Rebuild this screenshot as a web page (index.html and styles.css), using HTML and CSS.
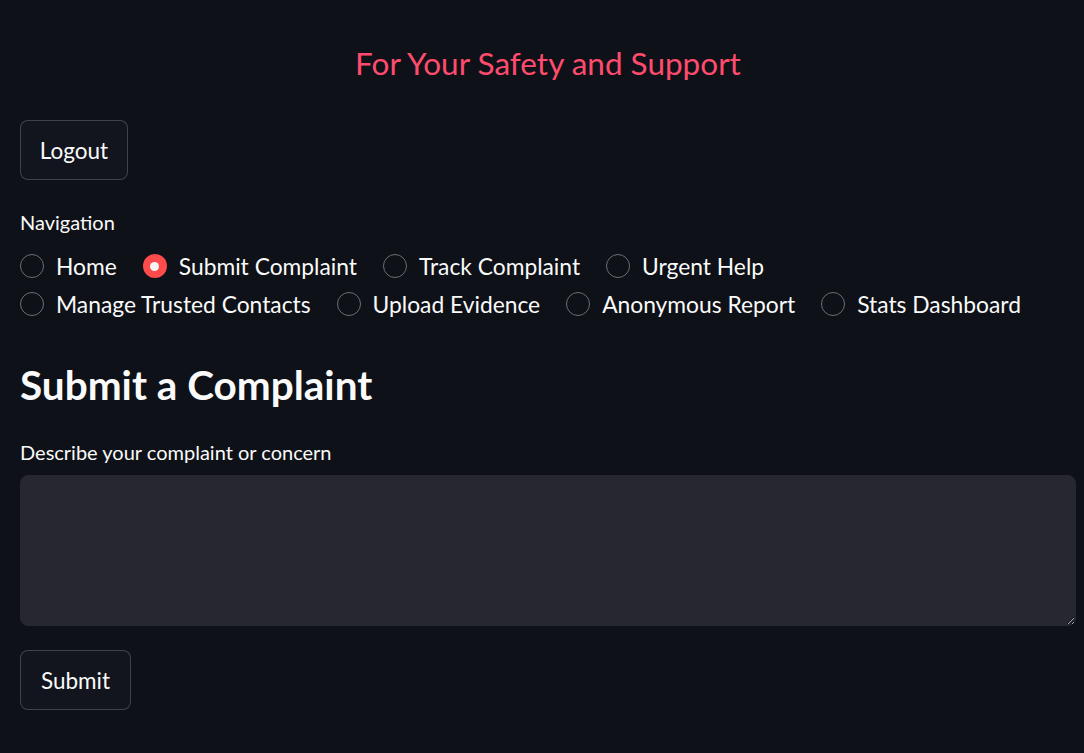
FILE: index.html
```html
<!DOCTYPE html>
<html>
<head>
<meta charset="utf-8">
<link rel="stylesheet" href="styles.css">
</head>
<body>
<div class="app">
  <div class="tagline">For Your Safety and Support</div>
  <button class="btn btn-logout">Logout</button>
  <div class="field-label nav-label">Navigation</div>
  <div class="radio-group">
    <label class="radio"><span class="dot"></span><span>Home</span></label>
    <label class="radio checked"><span class="dot"></span><span>Submit Complaint</span></label>
    <label class="radio"><span class="dot"></span><span>Track Complaint</span></label>
    <label class="radio"><span class="dot"></span><span>Urgent Help</span></label>
    <label class="radio"><span class="dot"></span><span>Manage Trusted Contacts</span></label>
    <label class="radio"><span class="dot"></span><span>Upload Evidence</span></label>
    <label class="radio"><span class="dot"></span><span>Anonymous Report</span></label>
    <label class="radio"><span class="dot"></span><span>Stats Dashboard</span></label>
  </div>
  <h2 class="heading">Submit a Complaint</h2>
  <div class="field-label desc-label">Describe your complaint or concern</div>
  <textarea class="textarea"></textarea>
  <button class="btn btn-submit">Submit</button>
</div>
</body>
</html>
```
FILE: styles.css
```css
html, body {
  margin: 0;
  padding: 0;
  background: #0e1117;
  height: 100%;
  overflow: hidden;
}
body {
  font-family: "Lato", "Noto Sans", sans-serif;
  color: #fafafa;
}
.app {
  display: flex;
  flex-direction: column;
  align-items: flex-start;
  padding: 0 8px 0 20px;
}
.tagline {
  align-self: stretch;
  text-align: center;
  color: #ff4b6e;
  font-size: 31.5px;
  line-height: 40px;
  margin-top: 43px;
}
.btn {
  font-family: inherit;
  font-size: 22.5px;
  color: #fafafa;
  background: #12151d;
  border: 1px solid rgba(250, 250, 250, 0.2);
  border-radius: 8px;
  height: 60px;
  padding: 0 14px;
  cursor: pointer;
}
.btn-logout {
  margin-top: 37px;
  width: 108px;
}
.field-label {
  font-size: 20px;
  line-height: 24px;
}
.nav-label {
  margin-top: 30px;
}
.radio-group {
  display: flex;
  flex-wrap: wrap;
  column-gap: 26px;
  row-gap: 6px;
  margin-top: 16px;
  max-width: 1030px;
}
.radio {
  display: flex;
  align-items: center;
  gap: 12px;
  font-size: 22.8px;
  line-height: 32px;
}
.dot {
  width: 24px;
  height: 24px;
  box-sizing: border-box;
  border-radius: 50%;
  border: 1.5px solid #6d6f75;
  background: #0e1117;
  display: flex;
  align-items: center;
  justify-content: center;
}
.radio.checked .dot {
  border: none;
  background: #ff4b4b;
}
.radio.checked .dot::after {
  content: "";
  width: 9px;
  height: 9px;
  border-radius: 50%;
  background: #f5f5f5;
}
.heading {
  font-size: 40.5px;
  font-weight: 700;
  line-height: 48px;
  margin: 41px 0 0 0;
}
.desc-label {
  margin-top: 31px;
}
.textarea {
  align-self: stretch;
  margin-top: 11px;
  height: 151px;
  box-sizing: border-box;
  background: #262730;
  border: 1px solid #262730;
  border-radius: 8px;
  color: #fafafa;
  font-family: inherit;
  font-size: 18px;
  padding: 12px;
  outline: none;
  resize: vertical;
}
.btn-submit {
  margin-top: 24px;
  width: 111px;
}
```
